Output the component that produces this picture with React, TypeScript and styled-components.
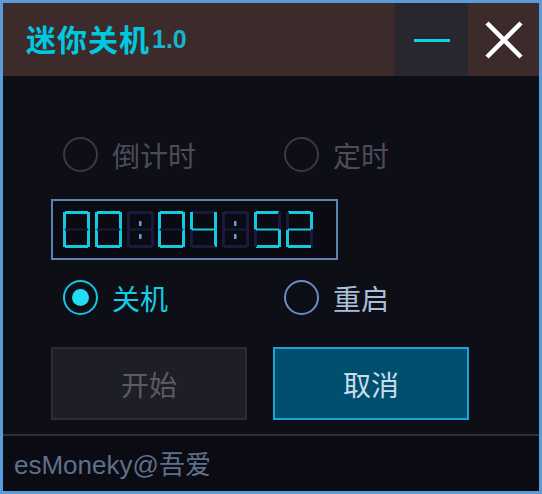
import React from "react";
import styled, { createGlobalStyle } from "styled-components";

const GlobalStyle = createGlobalStyle`
  html, body { margin: 0; padding: 0; background: #ffffff; }
  * { box-sizing: border-box; }
`;

const CJK = `"Noto Sans CJK SC", "Noto Sans", sans-serif`;

const Window = styled.div`
  width: 542px;
  height: 494px;
  border: 3px solid #5b9bd8;
  background: #0e0e17;
  display: flex;
  flex-direction: column;
  font-family: ${CJK};
`;

const TitleBar = styled.div`
  height: 73px;
  background: #3d2a2b;
  display: flex;
  align-items: stretch;
  flex-shrink: 0;
`;

const Title = styled.div`
  flex: 1;
  display: flex;
  align-items: center;
  padding-left: 23px;
  padding-bottom: 4px;
  color: #00c8e0;
  font-weight: 700;
  font-size: 30px;
  letter-spacing: 1px;
`;

const Version = styled.span`
  font-family: "Liberation Sans", Arial, sans-serif;
  font-size: 25px;
  font-weight: 700;
  color: #18b4cc;
  letter-spacing: 0;
  margin-left: 2px;
  margin-top: 4px;
`;

const TitleButton = styled.div<{ $hover?: boolean }>`
  width: ${(p) => (p.$hover ? 73 : 71)}px;
  background: ${(p) => (p.$hover ? "#28262f" : "transparent")};
  display: flex;
  align-items: center;
  justify-content: center;
`;

const Body = styled.div`
  flex: 1;
  padding: 61px 0 0 48px;
  display: flex;
  flex-direction: column;
`;

const RadioRow = styled.div<{ $mt: number }>`
  display: grid;
  grid-template-columns: 221px 1fr;
  margin-left: 12px;
  margin-top: ${(p) => p.$mt}px;
  height: 35px;
`;

type RadioState = "disabled" | "checked" | "normal";

const radioColors: Record<RadioState, { ring: string; text: string }> = {
  disabled: { ring: "#3a3a46", text: "#4c4c58" },
  checked: { ring: "#12c6de", text: "#14cde4" },
  normal: { ring: "#6a8ec2", text: "#a9c0d8" },
};

const RadioItem = styled.div<{ $state: RadioState }>`
  display: flex;
  align-items: center;
  gap: 14px;
  color: ${(p) => radioColors[p.$state].text};
  font-size: 28px;
  line-height: 1;
`;

const RadioCircle = styled.span<{ $state: RadioState }>`
  width: 35px;
  height: 35px;
  border-radius: 50%;
  border: 2px solid ${(p) => radioColors[p.$state].ring};
  display: flex;
  align-items: center;
  justify-content: center;
  flex-shrink: 0;
`;

const RadioDot = styled.span`
  width: 17px;
  height: 17px;
  border-radius: 50%;
  background: #22dcf4;
`;

const TimerBox = styled.div`
  margin-top: 27px;
  width: 287px;
  height: 61px;
  border: 2px solid #5d82b4;
  background: #0a0a12;
  display: flex;
  align-items: center;
  gap: 4.8px;
  padding-left: 10px;
`;

const ButtonRow = styled.div`
  margin-top: 32px;
  display: flex;
  gap: 26px;
`;

const Button = styled.div<{ $primary?: boolean }>`
  width: 196px;
  height: 73px;
  display: flex;
  align-items: center;
  justify-content: center;
  font-size: 28px;
  background: ${(p) => (p.$primary ? "#004f6e" : "#1e1e27")};
  border: 2px solid ${(p) => (p.$primary ? "#1aa2d4" : "#2c2c36")};
  color: ${(p) => (p.$primary ? "#c9dcea" : "#5b5b63")};
`;

const Footer = styled.div`
  height: 57px;
  flex-shrink: 0;
  border-top: 2px solid #2e2e35;
  background: #0b0b13;
  display: flex;
  align-items: center;
  padding-left: 11px;
  padding-bottom: 2px;
  color: #5f7089;
  font-size: 26px;
  font-family: "Liberation Sans", Arial, ${CJK};
`;

// Seven-segment LCD widget
const SEG_ON = "#16c8dc";
const SEG_OFF = "#1b1a3e";
const W = 27;
const H = 37;
const T = 3;

const segRects: Record<string, [number, number, number, number]> = {
  a: [T - 1, 0, W - 2 * T + 2, T],
  b: [W - T, 1, T, H / 2 - 1],
  c: [W - T, H / 2, T, H / 2 - 1],
  d: [T - 1, H - T, W - 2 * T + 2, T],
  e: [0, H / 2, T, H / 2 - 1],
  f: [0, 1, T, H / 2 - 1],
  g: [T - 1, H / 2 - 1, W - 2 * T + 2, 2],
};

const digitSegs: Record<string, string> = {
  "0": "abcdef",
  "1": "bc",
  "2": "abdeg",
  "3": "abcdg",
  "4": "bcfg",
  "5": "acdfg",
  "6": "acdefg",
  "7": "abc",
  "8": "abcdefg",
  "9": "abcdfg",
};

const LcdCell = ({ ch }: { ch: string }) => {
  const isColon = ch === ":";
  const on = isColon ? "" : digitSegs[ch] || "";
  return (
    <svg width={W} height={H} viewBox={`0 0 ${W} ${H}`} aria-hidden="true">
      {Object.entries(segRects).map(([k, [x, y, w, h]]) => (
        <rect key={k} x={x} y={y} width={w} height={h} fill={on.includes(k) ? SEG_ON : SEG_OFF} />
      ))}
      {isColon && (
        <>
          <rect x={12} y={10} width={2.5} height={5} fill="#6a9cca" />
          <rect x={12} y={23} width={2.5} height={5} fill="#6a9cca" />
        </>
      )}
    </svg>
  );
};

const Timer = ({ value }: { value: string }) => (
  <TimerBox role="img" aria-label={value} title={value}>
    {value.split("").map((c, i) => (
      <LcdCell key={i} ch={c} />
    ))}
  </TimerBox>
);

const Radio = ({ state, label }: { state: RadioState; label: string }) => (
  <RadioItem $state={state}>
    <RadioCircle $state={state}>{state === "checked" && <RadioDot />}</RadioCircle>
    {label}
  </RadioItem>
);

export default function App() {
  return (
    <>
      <GlobalStyle />
      <Window>
        <TitleBar>
          <Title>
            迷你关机<Version>1.0</Version>
          </Title>
          <TitleButton $hover>
            <svg width="36" height="6" viewBox="0 0 36 6">
              <rect x="0" y="2" width="36" height="3" fill="#10d0e4" />
            </svg>
          </TitleButton>
          <TitleButton>
            <svg width="40" height="40" viewBox="0 0 40 40">
              <path d="M3 3 L37 37 M37 3 L3 37" stroke="#ffffff" strokeWidth="4.5" />
            </svg>
          </TitleButton>
        </TitleBar>
        <Body>
          <RadioRow $mt={0}>
            <Radio state="disabled" label="倒计时" />
            <Radio state="disabled" label="定时" />
          </RadioRow>
          <Timer value="00:04:52" />
          <RadioRow $mt={20}>
            <Radio state="checked" label="关机" />
            <Radio state="normal" label="重启" />
          </RadioRow>
          <ButtonRow>
            <Button>开始</Button>
            <Button $primary>取消</Button>
          </ButtonRow>
        </Body>
        <Footer>esMoneky@吾爱</Footer>
      </Window>
    </>
  );
}
